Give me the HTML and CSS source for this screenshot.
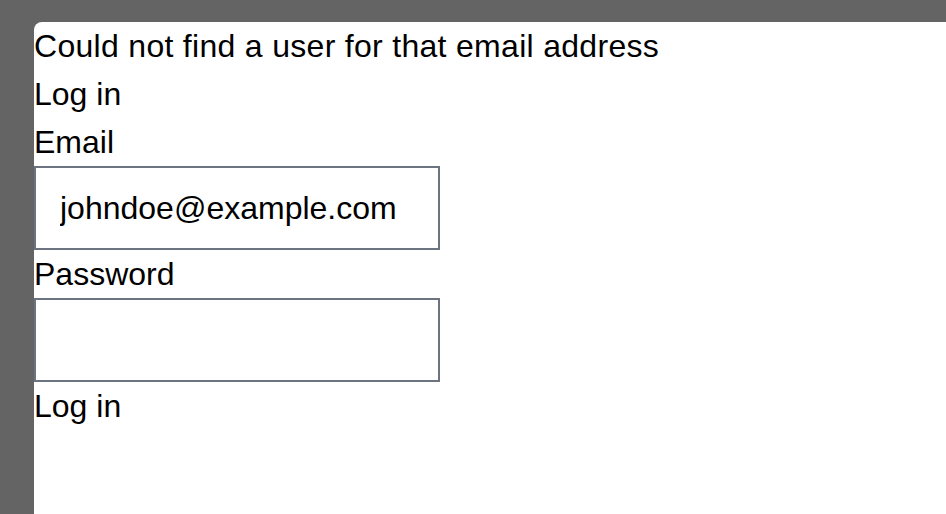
FILE: index.html
```html
<!DOCTYPE html>
<html lang="en">
<head>
<meta charset="utf-8">
<title>Log in</title>
<link rel="stylesheet" href="styles.css">
</head>
<body>
<main class="panel">
  <p class="flash">Could not find a user for that email address</p>
  <h1 class="title">Log in</h1>
  <form class="form">
    <label class="label" for="email">Email</label>
    <input class="field" id="email" type="email" value="johndoe@example.com">
    <label class="label" for="password">Password</label>
    <input class="field" id="password" type="password">
    <button class="submit" type="button">Log in</button>
  </form>
</main>
</body>
</html>
```
FILE: styles.css
```css
html, body {
  margin: 0;
  padding: 0;
  height: 100%;
}
body {
  background: #646464;
  font-family: "Liberation Sans", Arial, Helvetica, sans-serif;
  font-size: 32px;
  line-height: 48px;
  color: #000;
  overflow: hidden;
}
.panel {
  box-sizing: border-box;
  background: #fff;
  margin: 22px 0 0 34px;
  border-top-left-radius: 8px;
  height: calc(100% - 22px);
  padding-top: 1px;
}
.flash, .title {
  margin: 0;
  font-size: 32px;
  font-weight: normal;
  line-height: 48px;
}
.flash {
  margin-top: -1px;
  letter-spacing: 0.3px;
}
.form {
  display: flex;
  flex-direction: column;
  align-items: flex-start;
}
.label {
  display: block;
  line-height: 48px;
}
.field {
  box-sizing: border-box;
  width: 406px;
  height: 84px;
  margin: 0;
  padding: 16px 24px;
  border: 2px solid #6b7280;
  border-radius: 0;
  font: inherit;
  line-height: 48px;
  color: #000;
  background: #fff;
  outline: none;
}
.submit {
  margin: 0;
  padding: 0;
  border: 0;
  background: none;
  font: inherit;
  line-height: 48px;
  color: #000;
  text-align: left;
}
```
